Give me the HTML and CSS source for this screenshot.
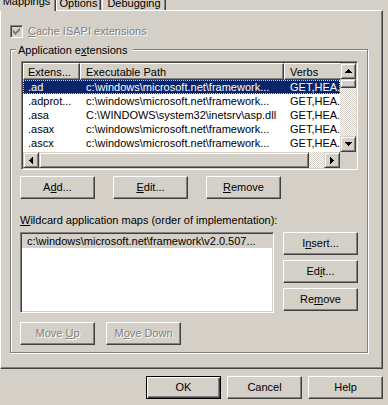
FILE: index.html
```html
<!DOCTYPE html>
<html>
<head>
<meta charset="utf-8">
<link rel="stylesheet" href="styles.css">
</head>
<body>
<div class="tabs">
  <div class="tab sel">Mappings</div>
  <div class="tab t-opt">Options</div>
  <div class="tab t-dbg">Debugging</div>
</div>
<div class="panel">
  <div class="chkrow">
    <span class="chk"><svg width="7" height="7" viewBox="0 0 7 7"><path fill="#808080" d="M6 0h1v1h-1z M5 1h2v1h-2z M0 2h1v1h-1z M4 2h3v1h-3z M0 3h2v1h-2z M3 3h3v1h-3z M0 4h5v1h-5z M1 5h3v1h-3z M2 6h1v1h-1z"/></svg></span>
    <span class="dis"><u>C</u>ache ISAPI extensions</span>
  </div>
  <div class="group">
    <span class="legend">Application e<u>x</u>tensions</span>
    <div class="lv">
      <div class="lv-main">
        <div class="lv-head">
          <div class="hc c1">Extens...</div>
          <div class="hc c2">Executable Path</div>
          <div class="hc c3">Verbs</div>
        </div>
        <div class="row sel">
          <div class="cell c1">.ad</div>
          <div class="cell c2">c:\windows\microsoft.net\framework...</div>
          <div class="cell c3">GET,HEA...</div>
        </div>
        <div class="row">
          <div class="cell c1">.adprot...</div>
          <div class="cell c2">c:\windows\microsoft.net\framework...</div>
          <div class="cell c3">GET,HEA...</div>
        </div>
        <div class="row">
          <div class="cell c1">.asa</div>
          <div class="cell c2">C:\WINDOWS\system32\inetsrv\asp.dll</div>
          <div class="cell c3">GET,HEA...</div>
        </div>
        <div class="row">
          <div class="cell c1">.asax</div>
          <div class="cell c2">c:\windows\microsoft.net\framework...</div>
          <div class="cell c3">GET,HEA...</div>
        </div>
        <div class="row">
          <div class="cell c1">.ascx</div>
          <div class="cell c2">c:\windows\microsoft.net\framework...</div>
          <div class="cell c3">GET,HEA...</div>
        </div>
        <div class="row">
          <div class="cell c1">.ashx</div>
          <div class="cell c2">c:\windows\microsoft.net\framework...</div>
          <div class="cell c3">GET,HEA...</div>
        </div>
      </div>
      <div class="vscroll">
        <div class="sbtn"><svg width="7" height="4" viewBox="0 0 7 4"><path d="M3 0h1v1h1v1h1v1h1v1h-7v-1h1v-1h1v-1h1z"/></svg></div>
        <div class="track vtrack"><div class="thumb vthumb"></div></div>
        <div class="sbtn"><svg width="7" height="4" viewBox="0 0 7 4"><path d="M0 0h7v1h-1v1h-1v1h-1v1h-1v-1h-1v-1h-1v-1h-1z"/></svg></div>
      </div>
      <div class="hscroll">
        <div class="sbtn"><svg width="4" height="7" viewBox="0 0 4 7"><path d="M3 0h1v7h-1v-1h-1v-1h-1v-1h-1v-1h1v-1h1v-1h1z"/></svg></div>
        <div class="track htrack"><div class="thumb hthumb"></div></div>
        <div class="sbtn"><svg width="4" height="7" viewBox="0 0 4 7"><path d="M0 0h1v1h1v1h1v1h1v1h-1v1h-1v1h-1v1h-1z"/></svg></div>
      </div>
      <div class="corner"></div>
    </div>
    <div class="btnrow">
      <div class="btn"><span>A<u>d</u>d...</span></div>
      <div class="btn"><span><u>E</u>dit...</span></div>
      <div class="btn"><span><u>R</u>emove</span></div>
    </div>
    <div class="lbl"><u>W</u>ildcard application maps (order of implementation):</div>
    <div class="wild">
      <div class="lb">
        <div class="lb-item">c:\windows\microsoft.net\framework\v2.0.507...</div>
      </div>
      <div class="wbtns">
        <div class="btn"><span>I<u>n</u>sert...</span></div>
        <div class="btn"><span>Ed<u>i</u>t...</span></div>
        <div class="btn"><span>Re<u>m</u>ove</span></div>
      </div>
    </div>
    <div class="moverow">
      <div class="btn dis"><span>Move <u>U</u>p</span></div>
      <div class="btn dis"><span>M<u>o</u>ve Down</span></div>
    </div>
  </div>
</div>
<div class="footer">
  <div class="btn def"><span>OK</span></div>
  <div class="btn"><span>Cancel</span></div>
  <div class="btn"><span>Help</span></div>
</div>
</body>
</html>
```
FILE: styles.css
```css
* { box-sizing: border-box; }
html, body { margin: 0; padding: 0; }
body {
  width: 388px;
  height: 405px;
  overflow: hidden;
  background: #d4d0c8;
  font-family: "Liberation Sans", Arial, sans-serif;
  font-size: 11px;
  line-height: 13px;
  color: #000;
}
u { text-decoration: underline; text-underline-offset: 1px; }

/* tabs */
.tabs {
  display: flex;
  align-items: flex-end;
  height: 10px;
  margin-left: -3px;
}
.tab {
  height: 18px;
  padding: 4px 0 1px;
  text-align: center;
  border-top: 1px solid #fff;
  border-left: 1px solid #fff;
  border-right: 1px solid #404040;
  box-shadow: inset -1px 0 #808080;
  background: #d4d0c8;
}
.tab.sel {
  width: 59px;
  height: 21px;
  padding-bottom: 2px;
  margin-bottom: -1px;
  position: relative;
  z-index: 1;
}
.t-opt { width: 45px; }
.t-dbg { width: 64px; margin-left: 1px; }

/* panel */
.panel {
  width: 383px;
  height: 359px;
  border: 1px solid;
  border-color: #fff #404040 #404040 #fff;
  box-shadow: inset -1px -1px #808080;
  padding: 14px 0 0 9px;
}
.chkrow {
  display: flex;
  align-items: center;
  height: 13px;
}
.chk {
  width: 13px;
  height: 13px;
  border: 1px solid;
  border-color: #808080 #fff #fff #808080;
  box-shadow: inset 1px 1px #404040, inset -1px -1px #d4d0c8;
  background: #d4d0c8;
  display: flex;
  align-items: center;
  justify-content: center;
  margin-right: 5px;
}
.chk svg { display: block; }
.dis {
  color: #808080;
  text-shadow: 1px 1px 0 #fff;
}

/* group box */
.group {
  position: relative;
  margin-top: 11px;
  width: 358px;
  height: 304px;
  border: 1px solid #808080;
  box-shadow: inset 1px 1px #fff, 1px 1px #fff;
  padding: 11px 0 0 9px;
}
.legend {
  position: absolute;
  left: 5px;
  top: -6px;
  padding: 0 6px 0 2px;
  background: #d4d0c8;
}

/* list view */
.lv {
  margin-left: 1px;
  width: 337px;
  height: 109px;
  border: 1px solid;
  border-color: #808080 #fff #fff #808080;
  box-shadow: inset 1px 1px #404040, inset -1px -1px #d4d0c8;
  padding: 1px;
  background: #fff;
  display: grid;
  grid-template-columns: 1fr 16px;
  grid-template-rows: 1fr 16px;
}
.lv-main { overflow: hidden; }
.lv-head {
  display: flex;
  height: 17px;
  background: #d4d0c8;
}
.hc {
  height: 17px;
  padding-top: 2px;
  border-top: 1px solid #fff;
  border-left: 1px solid #fff;
  border-right: 1px solid #404040;
  border-bottom: 1px solid #404040;
  box-shadow: inset -1px -1px #808080;
  white-space: nowrap;
  overflow: hidden;
  flex: none;
}
.c1 { width: 57px; padding-left: 4px; }
.c2 { width: 204px; padding-left: 5px; }
.c3 { width: 80px; padding-left: 5px; }
.row {
  display: flex;
  height: 14px;
  line-height: 14px;
}
.cell {
  white-space: nowrap;
  overflow: hidden;
  flex: none;
}
.row .c1 { padding-left: 5px; }
.row .c2 { padding-left: 6px; }
.row .c3 { padding-left: 6px; }
.row.sel {
  background: #0a246a;
  color: #fff;
  outline: 1px dotted #d8d890;
  outline-offset: -1px;
}

/* scrollbars */
.vscroll {
  display: flex;
  flex-direction: column;
}
.hscroll { display: flex; }
.sbtn {
  width: 16px;
  height: 16px;
  flex: none;
  background: #d4d0c8;
  border: 1px solid;
  border-color: #d4d0c8 #404040 #404040 #d4d0c8;
  box-shadow: inset 1px 1px #fff, inset -1px -1px #808080;
  display: flex;
  align-items: center;
  justify-content: center;
}
.sbtn svg { display: block; }
.track {
  flex: 1;
  background: repeating-conic-gradient(#d4d0c8 0 25%, #fff 0 50%) 0 0 / 2px 2px;
}
.thumb {
  background: #d4d0c8;
  border: 1px solid;
  border-color: #d4d0c8 #404040 #404040 #d4d0c8;
  box-shadow: inset 1px 1px #fff, inset -1px -1px #808080;
}
.vthumb { height: 9px; width: 16px; }
.htrack { display: flex; }
.hthumb { width: 270px; height: 16px; }
.corner { background: #d4d0c8; }

/* buttons */
.btn {
  width: 75px;
  height: 23px;
  flex: none;
  display: flex;
  align-items: center;
  justify-content: center;
  background: #d4d0c8;
  border: 1px solid;
  border-color: #fff #404040 #404040 #fff;
  box-shadow: inset -1px -1px #808080;
  white-space: nowrap;
}
.btn.def {
  border-color: #000;
  box-shadow: inset 1px 1px #fff, inset -1px -1px #404040, inset -2px -2px #808080;
}
.btnrow {
  display: flex;
  gap: 18px;
  margin-top: 6px;
}
.lbl { margin-top: 15px; }
.wild {
  display: flex;
  gap: 9px;
  margin-top: 5px;
}
.lb {
  width: 254px;
  height: 81px;
  border: 1px solid;
  border-color: #808080 #fff #fff #808080;
  box-shadow: inset 1px 1px #404040, inset -1px -1px #d4d0c8;
  padding: 1px;
  background: #fff;
}
.lb-item {
  height: 14px;
  line-height: 14px;
  padding-left: 5px;
  background: #d4d0c8;
  white-space: nowrap;
  overflow: hidden;
}
.wbtns {
  display: flex;
  flex-direction: column;
  gap: 5px;
}
.moverow {
  display: flex;
  gap: 11px;
  margin-top: 9px;
}
.footer {
  width: 383px;
  display: flex;
  justify-content: flex-end;
  gap: 6px;
  margin-top: 7px;
}
```
